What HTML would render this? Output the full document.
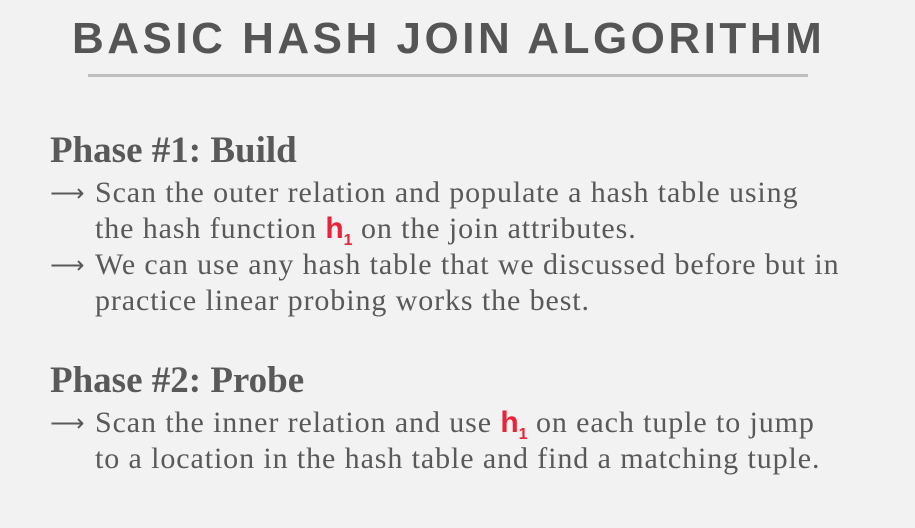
<!DOCTYPE html>
<html><head><style>
body{margin:0;width:915px;height:528px;background:#f2f2f2;overflow:hidden;position:relative;color:#595959}
.t{position:absolute;left:72px;top:14px;font:bold 44px "Liberation Sans",sans-serif;letter-spacing:3.5px;white-space:nowrap;color:#555}
.u{position:absolute;left:88px;top:74px;width:720px;height:3px;background:#bfbfbf}
.h{position:absolute;left:50px;font:bold 37px "Liberation Serif",serif;color:#595959;white-space:nowrap;line-height:40px}
.l{position:absolute;left:95px;font:30px "Liberation Serif",serif;letter-spacing:0.9px;color:#595959;white-space:nowrap;line-height:36px}
.a{position:absolute;left:50px;font:24px "DejaVu Sans",sans-serif;color:#595959;line-height:36px}
.r{color:#e8233a;font-family:"Liberation Sans",sans-serif;font-weight:bold;letter-spacing:0}
.r sub{font-size:16px;line-height:0}
</style></head><body>
<div class="t">BASIC HASH JOIN ALGORITHM</div>
<div class="u"></div>
<div class="h" style="top:131px">Phase #1: Build</div>
<div class="a" style="top:175px">⟶</div>
<div class="l" style="top:175px">Scan the outer relation and populate a hash table using</div>
<div class="l" style="top:211px">the hash function <span class="r">h<sub>1</sub></span> on the join attributes.</div>
<div class="a" style="top:247px">⟶</div>
<div class="l" style="top:247px">We can use any hash table that we discussed before but in</div>
<div class="l" style="top:283px">practice linear probing works the best.</div>
<div class="h" style="top:361px">Phase #2: Probe</div>
<div class="a" style="top:405px">⟶</div>
<div class="l" style="top:405px">Scan the inner relation and use <span class="r">h<sub>1</sub></span> on each tuple to jump</div>
<div class="l" style="top:441px">to a location in the hash table and find a matching tuple.</div>
</body></html>
